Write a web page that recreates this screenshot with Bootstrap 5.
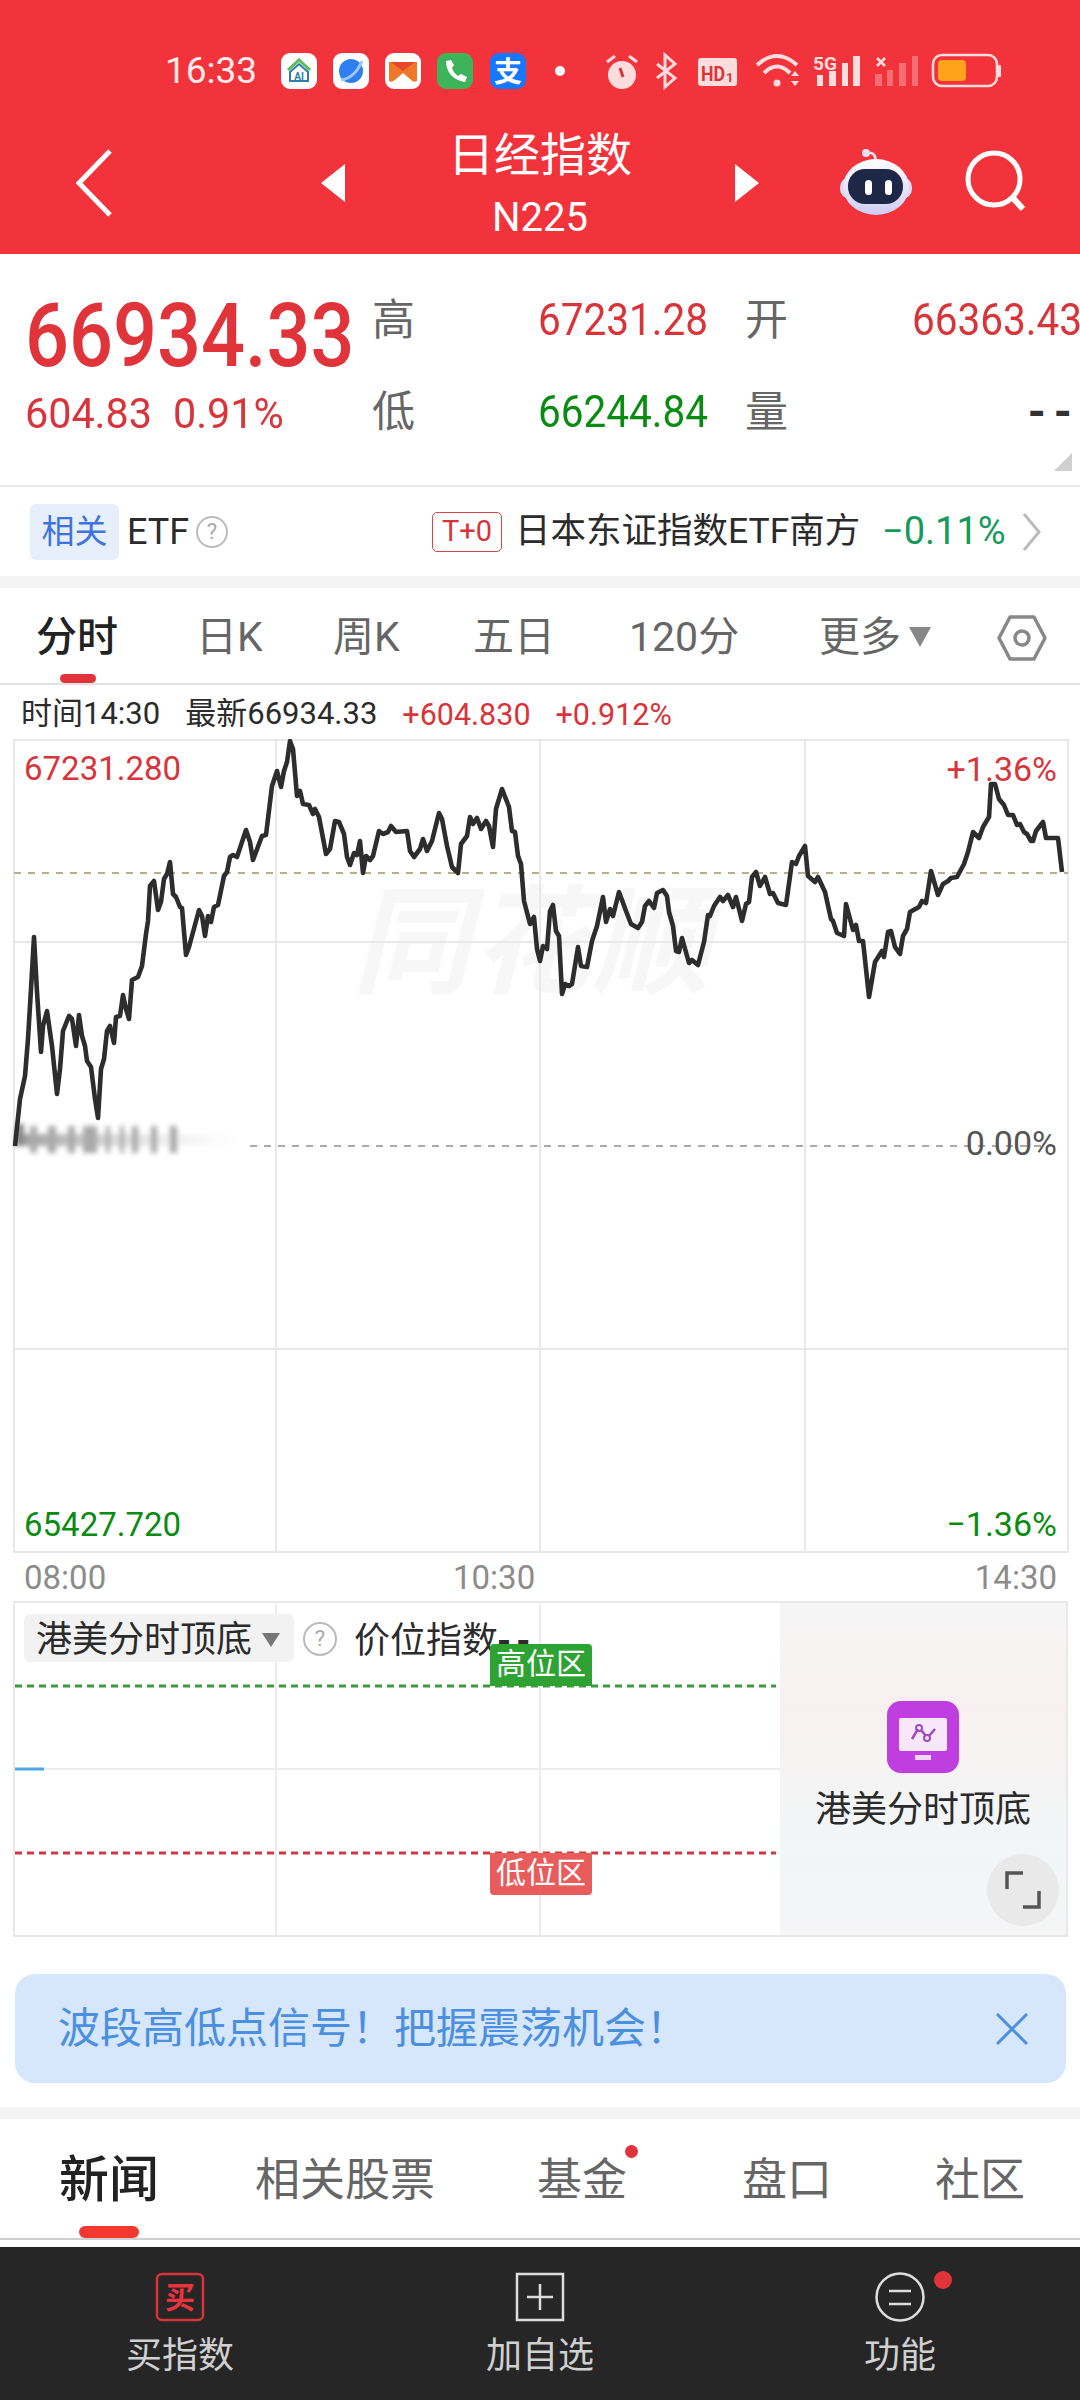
<!DOCTYPE html>
<html lang="zh-CN">
<head>
    <meta charset="UTF-8" />
    <meta name="viewport" content="width=device-width, initial-scale=1.0"/>
    <title>日经指数</title>
    <link href="https://cdn.jsdelivr.net/npm/bootstrap@5.3.0/dist/css/bootstrap.min.css" rel="stylesheet"/>
    <style>
        body {
            width: 1080px;
            height: 2400px;
            overflow: hidden;
            background: #fff;
            font-family: Roboto, "Noto Sans CJK SC", sans-serif;
            color: #2b2b2b;
        }

        .app-head { height: 254px; background: #f2333b; color: #fff; }
        .status-row { height: 92px; padding: 50px 0 0 165px; }
        .status-time { width: 116px; font-size: 37px; line-height: 42px; color: #fdeaea; }
        .sys-icons { margin-left: 29px; }
        .title-row { margin-top: 34px; height: 113px; }
        .title-side { width: 360px; }
        .title-back { padding: 0 15px 0 76px; }
        .title-next { padding-left: 15px; }
        .title-mid { width: 360px; text-align: center; }
        .title-cn { padding-top: 2px; font-size: 46px; line-height: 54px; }
        .title-code { font-size: 40px; line-height: 72px; }
        .robot-icon { margin-bottom: 4px; }
        .search-icon { margin: 0 52px 0 51px; }

        .quote-box { height: 231px; position: relative; overflow: hidden; }
        .quote-main { width: 372px; padding: 37px 0 0 25px; flex: none; }
        .big-num { font-size: 89px; line-height: 90px; font-weight: 500; color: #e0343a; height: 90px; }
        .num-squeeze { display: inline-block; transform: scaleX(.87); transform-origin: left center; white-space: nowrap; }
        .num-squeeze-mid { display: inline-block; transform: scaleX(.9); transform-origin: left center; white-space: nowrap; }
        .sub-num { margin-top: 7px; font-size: 43px; line-height: 50px; color: #d8343a; white-space: nowrap; }
        .sub-num .num-squeeze-mid { transform: scaleX(.96); }
        .sub-first { width: 148px; }
        .quote-grid {
            flex: none;
            width: 708px;
            padding-top: 20px;
            display: grid;
            grid-template-columns: 166px 168px 39px 167px 168px;
            grid-auto-rows: 92px;
            align-items: center;
            font-size: 45px;
            white-space: nowrap;
        }
        .q-label { font-size: 43px; color: #666; }
        .q-up { color: #d8343a; }
        .q-down { color: #0a8c12; }
        .q-none { text-align: right; font-size: 46px; color: #333; font-weight: 700; letter-spacing: 8px; }
        .corner-mark {
            position: absolute;
            right: 8px;
            bottom: 14px;
            border-left: 18px solid transparent;
            border-bottom: 18px solid #cfcfcf;
        }

        .etf-row { height: 91px; border-top: 2px solid #e9e9e9; padding-left: 30px; }
        .etf-tag { width: 89px; height: 56px; line-height: 56px; text-align: center; background: #e8effc; color: #3f74e0; border-radius: 6px; font-size: 33px; }
        .etf-name { margin-left: 8px; font-size: 36px; width: 59px; }
        .help-dot {
            flex: none;
            width: 32px;
            height: 32px;
            border: 2px solid #bbb;
            border-radius: 50%;
            color: #aaa;
            text-align: center;
            font-size: 22px;
            line-height: 28px;
        }
        .etf-help { margin-left: 10px; }
        .t0-tag { margin-left: 204px; width: 70px; height: 40px; line-height: 36px; text-align: center; border: 1.5px solid #d8454a; border-radius: 5px; color: #d8343a; font-size: 29px; }
        .etf-fund { margin-left: 13px; font-size: 35.5px; white-space: nowrap; width: 367px; }
        .etf-pct { width: 140px; font-size: 38px; color: #159a5c; white-space: nowrap; }

        .gap-band { height: 12px; background: #f4f4f4; }

        .period-tabs {
            height: 97px;
            position: relative;
            padding: 5px 0 0 36px;
            display: grid;
            grid-template-columns: 160px 137px 140px 156px 190px 178px 50px;
            align-items: center;
            font-size: 41px;
            color: #666;
            border-bottom: 2px solid #e2e2e2;
        }
        .period-on { color: #222; font-weight: 500; }
        .period-bar { position: absolute; left: 60px; bottom: 0; width: 36px; height: 9px; background: #e0343a; border-radius: 5px; }
        .more-arrow {
            display: inline-block;
            margin-left: 8px;
            vertical-align: 4px;
            border-left: 11px solid transparent;
            border-right: 11px solid transparent;
            border-top: 20px solid #888;
        }

        .tick-row { height: 54px; padding: 5px 0 0 21px; gap: 25px; font-size: 31px; white-space: nowrap; }
        .tick-up { color: #d8343a; font-size: 30.5px; }

        .price-chart { position: relative; height: 814px; }
        .price-chart svg { display: block; }
        .chart-text { position: absolute; line-height: 36px; white-space: nowrap; }
        .chart-left { left: 24px; font-size: 33px; }
        .chart-right { right: 23px; font-size: 34px; }
        .chart-mark { font-size: 118px; font-weight: 700; font-style: italic; fill: #f7f7f7; letter-spacing: 2px; }

        .axis-row { height: 48px; padding: 0 23px 0 24px; display: grid; grid-template-columns: 429px 1fr auto; align-items: center; font-size: 33px; color: #8c8c8c; }

        .sub-chart { height: 336px; position: relative; margin: 0 12px 0 13px; border: 2px solid #e8e8e8; overflow: hidden; }
        .sub-plot { width: 765px; position: relative; flex: none; }
        .sub-plot svg { display: block; }
        .line-pick {
            position: absolute;
            left: 9px;
            top: 11px;
            width: 270px;
            height: 48px;
            padding: 3px 0 0 12px;
            background: #f2f2f2;
            border-radius: 6px;
            font-size: 36px;
            white-space: nowrap;
        }
        .pick-arrow { margin-left: 10px; border-left: 9px solid transparent; border-right: 9px solid transparent; border-top: 14px solid #777; }
        .sub-help { position: absolute; left: 288px; top: 19px; width: 34px; height: 34px; line-height: 30px; }
        .sub-value { position: absolute; left: 339px; top: 14px; font-size: 36px; line-height: 48px; white-space: nowrap; }
        .sub-dash { margin-left: -1px; font-weight: 700; letter-spacing: 5px; }
        .zone-tag { position: absolute; left: 475px; width: 102px; height: 42px; line-height: 40px; text-align: center; color: #fff; font-size: 30px; }
        .zone-high { top: 41px; background: #2ea334; border-radius: 4px 4px 0 0; }
        .zone-low { top: 250px; background: #e85c5c; border-radius: 0 0 4px 4px; }
        .sub-side {
            flex: 1;
            position: relative;
            padding-top: 98px;
            text-align: center;
            font-size: 36px;
            background: linear-gradient(180deg, #f6f6f6 0%, #f8f0f0 32%, #f5f3f3 50%, #f2f6f7 72%, #f5f5f6 100%);
        }
        .side-label { margin-top: 13px; line-height: 48px; }
        .expand-btn { position: absolute; right: 7px; bottom: 9px; width: 72px; height: 72px; border-radius: 50%; background: #e9e9e9; }

        .tip-bar {
            margin: 37px 14px 24px 15px;
            height: 109px;
            padding: 0 38px 0 43px;
            background: #d6e6fb;
            border-radius: 20px;
            color: #4a8fe0;
            font-size: 42px;
            white-space: nowrap;
        }

        .news-tabs {
            height: 121px;
            position: relative;
            padding: 4px 0 0 59px;
            display: grid;
            grid-template-columns: 196px 282px 205px 193px 90px;
            align-items: center;
            font-size: 45px;
            color: #666;
            border-bottom: 2px solid #cfcfcf;
            white-space: nowrap;
        }
        .news-on { font-size: 50px; font-weight: 500; color: #222; }
        .news-dot { position: relative; }
        .news-dot::after { content: ""; position: absolute; left: 88px; top: -2px; width: 13px; height: 13px; border-radius: 50%; background: #e0343a; }
        .news-bar { position: absolute; left: 79px; bottom: 0; width: 60px; height: 12px; background: #f3392f; border-radius: 6px; }

        .foot-bar { position: absolute; left: 0; bottom: 0; width: 1080px; height: 153px; background: #262626; color: #d0d0d0; font-size: 36px; }
        .foot-item { width: 360px; padding-top: 25px; text-align: center; line-height: 52px; }
        .foot-item svg { display: block; margin: 0 auto 8px; }
        .foot-dot { left: 214px; top: 24px; width: 18px; height: 18px; background: #e0343a; }
    </style>
</head>
<body>

<header class="app-head">
    <div class="status-row d-flex align-items-start">
        <div class="status-time">16:33</div>
        <!-- 通知图标 -->
        <svg width="290" height="42" viewBox="0 0 290 42">
            <rect x="0" y="3" width="36" height="36" rx="9" fill="#fff"/>
            <path d="M7 20 L18 10 L29 20" fill="none" stroke="#5cb85c" stroke-width="3"/>
            <path d="M9 22 L18 14 L27 22 V31 H9 Z" fill="none" stroke="#2d7fa8" stroke-width="2"/>
            <text x="18" y="30" font-size="10" font-weight="700" fill="#2d7fa8" text-anchor="middle" font-family="Roboto">AI</text>

            <rect x="52" y="3" width="36" height="36" rx="9" fill="#fff"/>
            <circle cx="70" cy="21" r="12" fill="#2f7ff0"/>
            <path d="M60 30 Q74 28 81 11" fill="none" stroke="#9cc8fa" stroke-width="3"/>

            <rect x="104" y="3" width="36" height="36" rx="9" fill="#fff"/>
            <path d="M108 12 H136 V31 Q132 33 129 29 L122 23 L115 29 Q111 33 108 31 Z" fill="#f0762a"/>
            <path d="M110 12 H134 L122 21 Z" fill="#e8452c"/>

            <rect x="156" y="3" width="36" height="36" rx="9" fill="#3db45a"/>
            <path d="M165 11 C165 22 172 30 184 32 L186 27 L180 24 L177 26 C174 24 172 21 171 18 L173 15 L170 10 Z" fill="#fff"/>

            <rect x="209" y="3" width="36" height="36" rx="9" fill="#1677ff"/>
            <text x="227" y="32" font-size="28" font-weight="700" fill="#fff" text-anchor="middle" font-family="Noto Sans CJK SC">支</text>

            <circle cx="279" cy="21" r="5" fill="#fff"/>
        </svg>
        <!-- 系统图标 -->
        <svg class="sys-icons" width="410" height="42" viewBox="0 0 410 42">
            <circle cx="22" cy="25" r="14" fill="#fcdcdc"/>
            <path d="M7 12 L15 6 M29 6 L37 12" stroke="#fcdcdc" stroke-width="3"/>
            <path d="M20 18 L23 27" stroke="#d8343a" stroke-width="3"/>

            <path d="M57 14 L75 28 L65 37 V5 L75 14 L57 28" fill="none" stroke="#fcdcdc" stroke-width="3"/>

            <rect x="98" y="8" width="39" height="28" rx="3" fill="#fcdcdc"/>
            <text x="101" y="31" font-size="21" font-weight="700" fill="#d8343a" font-family="Roboto" textLength="24" lengthAdjust="spacingAndGlyphs">HD</text>
            <text x="126" y="32" font-size="13" font-weight="700" fill="#d8343a" font-family="Roboto">1</text>

            <path d="M157 15 Q177 -3 197 15 M164 23 Q177 10 190 23" fill="none" stroke="#fcdcdc" stroke-width="4"/>
            <circle cx="177" cy="33" r="3.5" fill="#fcdcdc"/>
            <path d="M191 26 L195 21 L199 26 Z M191 31 L199 31 L195 36 Z" fill="#fcdcdc"/>

            <text x="213" y="20" font-size="19" font-weight="700" fill="#fcdcdc" font-family="Roboto" textLength="24" lengthAdjust="spacingAndGlyphs">5G</text>
            <path d="M217 25 h6 v11 h-6 Z M229 21 h7 v15 h-7 Z M242 13 h6 v23 h-6 Z M253 6 h7 v30 h-7 Z" fill="#fcdcdc"/>

            <path d="M277 8 L285 16 M285 8 L277 16" stroke="#fcdcdc" stroke-width="2.5"/>
            <path d="M275 24 h7 v12 h-7 Z M287 20 h6 v16 h-6 Z M299 13 h7 v23 h-7 Z M312 6 h6 v30 h-6 Z" fill="#fcdcdc" opacity=".35"/>

            <rect x="333" y="5" width="64" height="31" rx="9" fill="none" stroke="#fcdcdc" stroke-width="2.5"/>
            <rect x="338" y="10" width="28" height="21" rx="4" fill="#ffa31a"/>
            <rect x="398" y="15" width="3" height="12" rx="1" fill="#fcdcdc"/>
        </svg>
    </div>

    <div class="title-row d-flex">
        <div class="title-side title-back d-flex align-items-center justify-content-between">
            <svg width="36" height="68" viewBox="0 0 36 68"><path d="M34 2 L3 34 L34 66" fill="none" stroke="#fff" stroke-width="5"/></svg>
            <svg width="24" height="38" viewBox="0 0 24 38"><path d="M24 0 V38 L0 19 Z" fill="#fff"/></svg>
        </div>
        <div class="title-mid">
            <div class="title-cn">日经指数</div>
            <div class="title-code">N225</div>
        </div>
        <div class="title-side title-next d-flex align-items-center">
            <svg width="24" height="38" viewBox="0 0 24 38"><path d="M0 0 V38 L24 19 Z" fill="#fff"/></svg>
            <svg class="robot-icon ms-auto" width="74" height="68" viewBox="0 0 74 68">
                <defs>
                    <linearGradient id="robotShell" x1="0" y1="0" x2="0" y2="1">
                        <stop offset="0" stop-color="#ffffff"/>
                        <stop offset="1" stop-color="#cfcdf3"/>
                    </linearGradient>
                </defs>
                <path d="M28 6 Q36 4 37 14" fill="none" stroke="#e7e4fa" stroke-width="2.5"/>
                <circle cx="27" cy="6" r="4" fill="#e7e4fa"/>
                <rect x="1" y="30" width="72" height="22" rx="10" fill="#dcdaf5"/>
                <ellipse cx="37" cy="40" rx="33" ry="28" fill="url(#robotShell)"/>
                <rect x="9" y="22" width="55" height="35" rx="17" fill="#1f2747"/>
                <rect x="26" y="33" width="7" height="15" rx="3.5" fill="#fff"/>
                <rect x="46" y="33" width="7" height="15" rx="3.5" fill="#fff"/>
            </svg>
            <svg class="search-icon" width="64" height="66" viewBox="0 0 64 66">
                <circle cx="30" cy="29" r="26" fill="none" stroke="#fff" stroke-width="5"/>
                <path d="M49 48 L59 59" stroke="#fff" stroke-width="6"/>
            </svg>
        </div>
    </div>
</header>

<section class="quote-box d-flex">
    <div class="quote-main">
        <div class="big-num"><span class="num-squeeze">66934.33</span></div>
        <div class="sub-num"><span class="num-squeeze-mid sub-first">604.83</span><span class="num-squeeze-mid">0.91%</span></div>
    </div>
    <div class="quote-grid">
        <div class="q-label">高</div>
        <div class="q-up"><span class="num-squeeze-mid">67231.28</span></div>
        <div></div>
        <div class="q-label">开</div>
        <div class="q-up"><span class="num-squeeze-mid">66363.43</span></div>
        <div class="q-label">低</div>
        <div class="q-down"><span class="num-squeeze-mid">66244.84</span></div>
        <div></div>
        <div class="q-label">量</div>
        <div class="q-none">--</div>
    </div>
    <div class="corner-mark"></div>
</section>

<section class="etf-row d-flex align-items-center">
    <div class="etf-tag">相关</div>
    <div class="etf-name">ETF</div>
    <div class="help-dot etf-help">?</div>
    <div class="t0-tag">T+0</div>
    <div class="etf-fund">日本东证指数ETF南方</div>
    <div class="etf-pct">−0.11%</div>
    <svg width="20" height="40" viewBox="0 0 20 40"><path d="M2 2 L17 20 L2 38" fill="none" stroke="#bbb" stroke-width="3"/></svg>
</section>
<div class="gap-band"></div>

<nav class="period-tabs">
    <div class="period-on">分时</div>
    <div>日K</div>
    <div>周K</div>
    <div>五日</div>
    <div>120分</div>
    <div>更多<span class="more-arrow"></span></div>
    <svg width="50" height="48" viewBox="0 0 50 48">
        <path d="M13 3 H37 L48 24 L37 45 H13 L2 24 Z" fill="none" stroke="#888" stroke-width="3.5" stroke-linejoin="round"/>
        <circle cx="25" cy="24" r="7" fill="none" stroke="#888" stroke-width="3.5"/>
    </svg>
    <div class="period-bar"></div>
</nav>

<div class="tick-row d-flex align-items-center">
    <span>时间14:30</span>
    <span>最新66934.33</span>
    <span class="tick-up">+604.830</span>
    <span class="tick-up">+0.912%</span>
</div>

<section class="price-chart">
    <svg width="1080" height="814" viewBox="0 740 1080 814">
        <defs>
            <filter id="smudge" x="-10%" y="-30%" width="120%" height="160%"><feGaussianBlur stdDeviation="2.5"/></filter>
            <linearGradient id="smudgeFade" x1="0" y1="0" x2="1" y2="0">
                <stop offset="0" stop-color="#999"/>
                <stop offset="1" stop-color="#eee" stop-opacity="0"/>
            </linearGradient>
        </defs>
        <text class="chart-mark" x="352" y="985">同花顺</text>
        <g stroke="#e8e8e8" stroke-width="2" fill="none">
            <rect x="14" y="741" width="1054" height="812"/>
            <path d="M276 741 V1553 M540 741 V1553 M805 741 V1553 M14 943 H1068 M14 1350 H1068"/>
        </g>
        <path d="M14 874 H1068" stroke="#b9ad8c" stroke-width="2" stroke-dasharray="7 7"/>
        <path d="M250 1147 H1062" stroke="#aaa" stroke-width="2" stroke-dasharray="7 7"/>
        <g filter="url(#smudge)" fill="#aaa">
            <rect x="15" y="1135" width="235" height="12" fill="url(#smudgeFade)"/>
            <rect x="16" y="1125" width="8" height="22" fill="#888"/>
            <rect x="30" y="1127" width="7" height="27"/>
            <rect x="48" y="1127" width="8" height="27"/>
            <rect x="68" y="1127" width="7" height="27"/>
            <rect x="83" y="1127" width="14" height="27"/>
            <rect x="106" y="1127" width="4" height="27"/>
            <rect x="120" y="1127" width="4" height="27"/>
            <rect x="132" y="1127" width="6" height="27"/>
            <rect x="151" y="1127" width="6" height="27"/>
            <rect x="170" y="1127" width="7" height="27"/>
        </g>
        <polyline fill="none" stroke="#2d2d2d" stroke-width="4.6" stroke-linejoin="round" points="15,1147 20,1100 25,1077 28,1040 31,990 34,938 37,993 41,1053 43,1027 47,1012 52,1047 57,1095 60,1070 63,1032 69,1017 72,1020 76,1047 79,1016 82,1037 85,1047 87,1062 91,1068 95,1100 98,1119 101,1070 104,1060 107,1032 110,1027 114,1044 116,1018 120,1017 123,996 126,1010 129,1020 132,981 138,978 142,967 146,935 148,922 150,887 154,882 158,911 161,903 164,880 167,875 170,863 173,895 176,898 180,908 182,909 186,956 189,948 199,911 202,917 205,937 208,917 211,923 214,908 218,906 224,877 227,873 230,858 233,856 237,858 246,831 250,843 253,861 262,837 266,836 272,787 277,772 281,788 284,772 287,763 290,742 293,750 297,797 300,792 303,805 309,806 313,815 315,810 319,818 326,855 330,850 335,822 339,823 344,835 347,858 350,866 354,854 357,856 360,842 363,874 366,857 370,861 373,857 379,832 383,835 388,833 391,827 396,833 407,832 410,852 414,858 420,850 423,840 427,852 432,842 439,814 442,820 447,847 452,868 458,874 461,845 467,837 470,818 473,825 477,819 481,830 486,822 489,827 493,848 496,810 502,790 509,808 512,832 515,833 518,857 521,865 524,902 530,925 534,918 537,950 540,962 543,947 547,950 550,912 553,906 556,932 559,937 562,995 565,985 569,987 572,985 578,948 581,967 587,968 592,942 597,927 603,898 606,923 610,910 613,917 619,893 626,912 631,925 638,929 642,923 645,907 649,902 654,909 657,894 663,891 667,897 669,913 673,927 676,952 679,953 682,939 689,964 692,961 698,966 704,943 708,916 710,917 714,907 720,898 723,902 728,896 733,908 736,898 742,922 746,905 749,903 752,878 756,873 760,887 765,878 770,895 773,894 778,904 786,906 792,863 796,865 799,857 805,847 808,877 815,883 818,878 825,893 831,920 833,922 837,934 844,937 846,905 853,931 856,926 859,942 863,942 869,998 875,963 882,952 884,958 888,933 891,932 895,948 900,955 903,937 907,930 910,913 919,908 922,902 926,904 931,872 938,896 943,885 948,882 951,879 957,878 964,865 968,853 973,833 979,839 983,828 989,818 991,785 995,785 999,800 1004,806 1008,816 1013,816 1017,826 1020,825 1024,833 1027,835 1031,842 1033,842 1036,832 1043,823 1046,839 1058,839 1062,873"/>
    </svg>
    <div class="chart-text chart-left q-up" style="top:12px">67231.280</div>
    <div class="chart-text chart-right q-up" style="top:12px">+1.36%</div>
    <div class="chart-text chart-right" style="top:386px;color:#555">0.00%</div>
    <div class="chart-text chart-left q-down" style="top:768px">65427.720</div>
    <div class="chart-text chart-right q-down" style="top:767px">−1.36%</div>
</section>

<div class="axis-row">
    <span>08:00</span>
    <span>10:30</span>
    <span>14:30</span>
</div>

<section class="sub-chart d-flex">
    <div class="sub-plot">
        <svg width="765" height="332" viewBox="15 1603 765 332">
            <path d="M276 1603 V1935 M540 1603 V1935 M15 1769 H780" stroke="#e8e8e8" stroke-width="1.5" fill="none"/>
            <path d="M15 1686 H776" stroke="#3c9a3c" stroke-width="3" stroke-dasharray="7 5"/>
            <path d="M15 1853 H776" stroke="#d0393f" stroke-width="3" stroke-dasharray="7 5"/>
            <path d="M15 1769 H44" stroke="#4da6e8" stroke-width="3"/>
        </svg>
        <div class="line-pick d-flex align-items-center">港美分时顶底<span class="pick-arrow"></span></div>
        <div class="help-dot sub-help">?</div>
        <div class="sub-value">价位指数<span class="sub-dash">--</span></div>
        <div class="zone-tag zone-high">高位区</div>
        <div class="zone-tag zone-low">低位区</div>
    </div>
    <div class="sub-side">
        <svg width="72" height="72" viewBox="0 0 72 72">
            <rect width="72" height="72" rx="14" fill="#c03ee0"/>
            <rect x="12" y="17" width="48" height="33" rx="2" fill="#f8e6fb"/>
            <rect x="28" y="54" width="16" height="5" fill="#f3d6f8"/>
            <path d="M25 38 L31 28 M34 29 L39 35 M42 35 L48 28" fill="none" stroke="#9c4dbb" stroke-width="2.5"/>
            <circle cx="32" cy="27" r="3" fill="none" stroke="#9c4dbb" stroke-width="2"/>
            <circle cx="40" cy="37" r="3" fill="none" stroke="#9c4dbb" stroke-width="2"/>
        </svg>
        <div class="side-label">港美分时顶底</div>
        <div class="expand-btn d-flex align-items-center justify-content-center">
            <svg width="36" height="38" viewBox="0 0 36 38"><path d="M2 18 V2 H18 M34 20 V36 H18" fill="none" stroke="#555" stroke-width="3.5"/></svg>
        </div>
    </div>
</section>

<div class="tip-bar d-flex align-items-center justify-content-between">
    <span>波段高低点信号！把握震荡机会！</span>
    <svg width="32" height="32" viewBox="0 0 32 32"><path d="M1 1 L31 31 M31 1 L1 31" stroke="#4a8fe0" stroke-width="3"/></svg>
</div>
<div class="gap-band"></div>

<nav class="news-tabs">
    <div class="news-on">新闻</div>
    <div>相关股票</div>
    <div class="news-dot">基金</div>
    <div>盘口</div>
    <div>社区</div>
    <div class="news-bar"></div>
</nav>

<footer class="foot-bar d-flex">
    <div class="foot-item">
        <svg width="50" height="50" viewBox="0 0 50 50">
            <rect x="2" y="2" width="46" height="46" rx="5" fill="none" stroke="#d8343a" stroke-width="2.5"/>
            <text x="25" y="36" font-size="30" font-weight="700" fill="#e8343f" text-anchor="middle" font-family="Noto Sans CJK SC">买</text>
        </svg>
        买指数
    </div>
    <div class="foot-item">
        <svg width="50" height="50" viewBox="0 0 50 50">
            <rect x="2" y="2" width="46" height="46" fill="none" stroke="#ddd" stroke-width="2.5"/>
            <path d="M25 12 V38 M12 25 H38" stroke="#ddd" stroke-width="2.5"/>
        </svg>
        加自选
    </div>
    <div class="foot-item position-relative">
        <svg width="52" height="50" viewBox="0 0 52 50">
            <circle cx="26" cy="25" r="23.5" fill="none" stroke="#ddd" stroke-width="2.5"/>
            <path d="M15 19 H37 M15 32 H37" stroke="#ddd" stroke-width="2.5"/>
        </svg>
        功能
        <span class="foot-dot position-absolute rounded-circle"></span>
    </div>
</footer>

<script src="https://cdn.jsdelivr.net/npm/bootstrap@5.3.0/dist/js/bootstrap.bundle.min.js"></script>
</body>
</html>
